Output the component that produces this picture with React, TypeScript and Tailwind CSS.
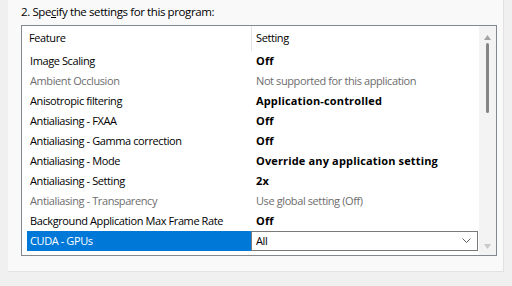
import React from 'react';

type Row = { feature: string; value: string; muted?: boolean; bold?: boolean };

const rows: Row[] = [
  { feature: 'Image Scaling', value: 'Off', bold: true },
  { feature: 'Ambient Occlusion', value: 'Not supported for this application', muted: true },
  { feature: 'Anisotropic filtering', value: 'Application-controlled', bold: true },
  { feature: 'Antialiasing - FXAA', value: 'Off', bold: true },
  { feature: 'Antialiasing - Gamma correction', value: 'Off', bold: true },
  { feature: 'Antialiasing - Mode', value: 'Override any application setting', bold: true },
  { feature: 'Antialiasing - Setting', value: '2x', bold: true },
  { feature: 'Antialiasing - Transparency', value: 'Use global setting (Off)', muted: true },
  { feature: 'Background Application Max Frame Rate', value: 'Off', bold: true },
];

const App: React.FC = () => {
  return (
    <div
      className="w-[512px] h-[286px] bg-[#f0f0f0] overflow-hidden text-[11px] tracking-[-0.4px] text-black"
      style={{ fontFamily: '"Open Sans", "Noto Sans", sans-serif' }}
    >
      <div className="ml-[8px] w-[496px] h-[272px] bg-[#f9f9f9] border-r border-b border-[#e2e2e2]">
        {/* Title */}
        <div className="h-[25px] pl-[13px] pt-[4px] leading-[16px] text-[11.5px]">
          2. Spe<span className="underline">c</span>ify the settings for this program:
        </div>

        {/* List box */}
        <div className="ml-[13px] w-[476px] h-[231px] border border-[#828790] bg-white flex">
          <div className="w-[457px] flex flex-col">
            {/* Header */}
            <div className="h-[25px] flex items-center">
              <div className="w-[229px] h-full pl-[7px] flex items-center">Feature</div>
              <div className="w-px h-full bg-[#e5e5e5]" />
              <div className="pl-[4px]">Setting</div>
            </div>

            {rows.map((r) => (
              <div key={r.feature} className="h-[20px] flex items-center leading-[20px]">
                <div className={`w-[229px] pl-[8px] whitespace-nowrap ${r.muted ? 'text-[#6d6d6d]' : ''}`}>
                  {r.feature}
                </div>
                <div
                  className={`pl-[5px] whitespace-nowrap ${r.muted ? 'text-[#6d6d6d]' : ''} ${r.bold ? 'font-bold tracking-[0.15px]' : ''}`}
                >
                  {r.value}
                </div>
              </div>
            ))}

            {/* Selected row */}
            <div className="h-[20px] flex">
              <div className="ml-[5px] w-[224px] bg-[#0078d7] text-white pl-[3px] leading-[20px]">CUDA - GPUs</div>
              <div className="w-[227px] border border-[#7a7a7a] bg-white flex items-center justify-between pl-[4px] pr-[6px] leading-[18px]">
                <span>All</span>
                <svg width="9" height="5" viewBox="0 0 9 5" className="mb-[1px]">
                  <polyline points="0.5,0.5 4.5,4.5 8.5,0.5" fill="none" stroke="#606060" strokeWidth="1" />
                </svg>
              </div>
            </div>
          </div>

          {/* Scrollbar */}
          <div className="w-[17px] bg-[#f3f3f3] flex flex-col items-center">
            <svg width="7" height="5" viewBox="0 0 7 5" className="mt-[9px]">
              <polygon points="3.5,0 7,5 0,5" fill="#a3a3a3" />
            </svg>
            <div className="mt-[3px] w-[3px] h-[70px] rounded-full bg-[#858585]" />
            <div className="flex-1" />
            <svg width="7" height="5" viewBox="0 0 7 5" className="mb-[6px]">
              <polygon points="0,0 7,0 3.5,5" fill="#c9c9c9" />
            </svg>
          </div>
        </div>
      </div>
    </div>
  );
};

export default App;
